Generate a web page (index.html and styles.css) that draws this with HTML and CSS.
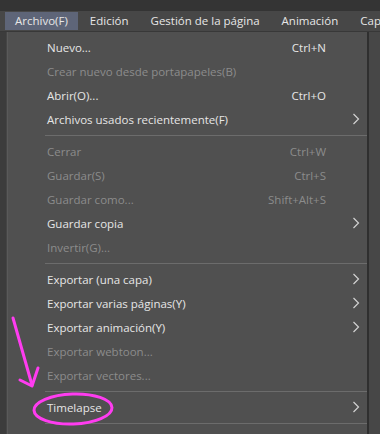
FILE: index.html
```html
<!DOCTYPE html>
<html lang="es">
<head>
<meta charset="UTF-8">
<meta name="viewport" content="width=device-width, initial-scale=1.0">
<title>Archivo</title>
<link rel="stylesheet" href="styles.css">
</head>
<body>

<div class="topstrip"></div>

<div class="menubar">
  <span class="menubar-item active">Archivo(F)</span>
  <span class="menubar-item">Edición</span>
  <span class="menubar-item">Gestión de la página</span>
  <span class="menubar-item">Animación</span>
  <span class="menubar-item">Capa</span>
</div>

<div class="workspace">
  <div class="gutter"></div>

  <div class="menu">
    <div class="row"><span class="label">Nuevo...</span><span class="key">Ctrl+N</span><span class="sub"></span></div>
    <div class="row off"><span class="label">Crear nuevo desde portapapeles(B)</span><span class="key"></span><span class="sub"></span></div>
    <div class="row"><span class="label">Abrir(O)...</span><span class="key">Ctrl+O</span><span class="sub"></span></div>
    <div class="row"><span class="label">Archivos usados recientemente(F)</span><span class="key"></span><span class="sub"><svg width="8" height="12" viewBox="0 0 8 12"><path d="M1.5 1 L6.5 6 L1.5 11"/></svg></span></div>
    <div class="sep"></div>
    <div class="row off"><span class="label">Cerrar</span><span class="key">Ctrl+W</span><span class="sub"></span></div>
    <div class="row off"><span class="label">Guardar(S)</span><span class="key">Ctrl+S</span><span class="sub"></span></div>
    <div class="row off"><span class="label">Guardar como...</span><span class="key">Shift+Alt+S</span><span class="sub"></span></div>
    <div class="row"><span class="label">Guardar copia</span><span class="key"></span><span class="sub"><svg width="8" height="12" viewBox="0 0 8 12"><path d="M1.5 1 L6.5 6 L1.5 11"/></svg></span></div>
    <div class="row off"><span class="label">Invertir(G)...</span><span class="key"></span><span class="sub"></span></div>
    <div class="sep"></div>
    <div class="row"><span class="label">Exportar (una capa)</span><span class="key"></span><span class="sub"><svg width="8" height="12" viewBox="0 0 8 12"><path d="M1.5 1 L6.5 6 L1.5 11"/></svg></span></div>
    <div class="row"><span class="label">Exportar varias páginas(Y)</span><span class="key"></span><span class="sub"><svg width="8" height="12" viewBox="0 0 8 12"><path d="M1.5 1 L6.5 6 L1.5 11"/></svg></span></div>
    <div class="row"><span class="label">Exportar animación(Y)</span><span class="key"></span><span class="sub"><svg width="8" height="12" viewBox="0 0 8 12"><path d="M1.5 1 L6.5 6 L1.5 11"/></svg></span></div>
    <div class="row off"><span class="label">Exportar webtoon...</span><span class="key"></span><span class="sub"></span></div>
    <div class="row off"><span class="label">Exportar vectores...</span><span class="key"></span><span class="sub"></span></div>
    <div class="sep"></div>
    <div class="row"><span class="label">Timelapse</span><span class="key"></span><span class="sub"><svg width="8" height="12" viewBox="0 0 8 12"><path d="M1.5 1 L6.5 6 L1.5 11"/></svg></span></div>
    <div class="sep"></div>
  </div>

  <div class="rightside"></div>
</div>

<!-- hand-drawn pink marks over the menu -->
<svg class="marks" width="380" height="434" viewBox="0 0 380 434">
  <g fill="none" stroke="#ff3cf0" stroke-width="3" stroke-linecap="round" stroke-linejoin="round">
    <path d="M13 318 L32 385"/>
    <path d="M20 380 L32 386 L38 368"/>
    <ellipse cx="73" cy="409" rx="39" ry="15" transform="rotate(-2 73 409)"/>
  </g>
</svg>

</body>
</html>
```

FILE: styles.css
```css
body {
  margin: 0;
  width: 380px;
  height: 434px;
  overflow: hidden;
  background-color: #474747;
  font-family: "Open Sans", "Noto Sans", sans-serif;
  font-size: 11.5px;
  color: #e6e6e6;
  position: relative;
}
.topstrip {
  height: 11px;
  background-color: #343434;
}
.menubar {
  height: 21px;
  display: flex;
  align-items: center;
  padding-left: 5px;
  background-color: #474747;
  border-bottom: 1px solid #383838;
  box-sizing: border-box;
  overflow: hidden;
}
.menubar-item {
  height: 18px;
  line-height: 18px;
  padding: 0 10px;
  margin-right: 2px;
  color: #e6e6e6;
  white-space: nowrap;
}
.menubar-item.active {
  background-color: #5e6578;
}
.workspace {
  display: flex;
  height: 402px;
}
.gutter {
  width: 7px;
  background-color: #3c3c3c;
  border-right: 1px solid #454545;
  box-sizing: border-box;
}
.menu {
  width: 362px;
  background-color: #505050;
  border-left: 1px solid #5a5a5a;
  border-right: 2px solid #2f2f2f;
  padding-top: 3px;
  box-sizing: border-box;
}
.rightside {
  flex: 1;
  background-color: #474747;
}
.row {
  display: grid;
  grid-template-columns: 1fr auto 41px;
  align-items: center;
  height: 24px;
  padding-left: 39px;
  white-space: nowrap;
}
.row.off {
  color: #8c8c8c;
}
.key {
  text-align: right;
}
.sub {
  display: flex;
  align-items: center;
  padding-left: 26px;
}
.sub path {
  fill: none;
  stroke: #d2d2d2;
  stroke-width: 1.2;
}
.sep {
  height: 8px;
  margin-left: 37px;
  display: flex;
  align-items: center;
}
.sep::after {
  content: "";
  flex: 1;
  height: 1px;
  background-color: #6c6c6c;
}
.marks {
  position: absolute;
  left: 0;
  top: 0;
  pointer-events: none;
}
```
